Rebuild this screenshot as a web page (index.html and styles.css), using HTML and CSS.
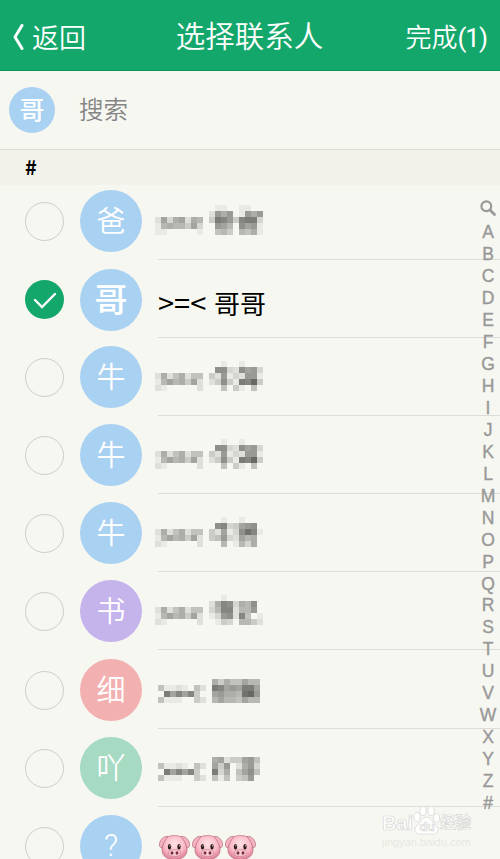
FILE: index.html
```html
<!DOCTYPE html>
<html lang="zh-CN">
<head>
    <meta charset="UTF-8">
    <title>选择联系人</title>
    <link rel="stylesheet" href="styles.css">
</head>
<body>
<svg class="defs">
    <defs>
        <radialGradient id="skin" cx="50%" cy="35%" r="65%">
            <stop offset="0" stop-color="#ffe0e4"/>
            <stop offset="0.6" stop-color="#fbbcc8"/>
            <stop offset="1" stop-color="#dd7f98"/>
        </radialGradient>
        <symbol id="pig" viewBox="0 0 31 29">
            <path d="M15.500 .6C22 .6 26 3 27 8c.6 2.500 1 4 1 7 0 6-5 9.500-12.500 9.500S3 21 3 15c0-3 .4-4.500 1-7C5 3 9 .6 15.500 .6z" fill="url(#skin)" stroke="#bd6c81" stroke-width=".7"/>
            <path d="M9 1.500C5 .8 1.500 4 .5 8.500c-.4 2 .5 4.500 2.500 4.500C4 9 6 5 9 1.500zM22 1.500c4-.7 7.500 2.500 8.500 7 .4 2-.5 4.500-2.500 4.500C27 9 25 5 22 1.500z" fill="#f3b3bf" stroke="#b5687c" stroke-width=".7"/>
            <ellipse cx="10.500" cy="11.800" rx="1.700" ry="2.700" fill="#2b1a1d"/>
            <ellipse cx="20" cy="11.800" rx="1.700" ry="2.700" fill="#2b1a1d"/>
            <circle cx="10.900" cy="10.800" r=".6" fill="#fff"/>
            <circle cx="20.400" cy="10.800" r=".6" fill="#fff"/>
            <rect x="9.500" y="14.800" width="12" height="6.400" rx="3.200" fill="#fbd0d6" stroke="#c9788c" stroke-width=".7"/>
            <ellipse cx="13" cy="18" rx="1.500" ry="1.700" fill="#7b2d3e"/>
            <ellipse cx="18" cy="18" rx="1.500" ry="1.700" fill="#7b2d3e"/>
        </symbol>
    </defs>
</svg>
<div class="page">
    <div class="header">
        <div class="back">
            <svg width="12" height="26" viewBox="0 0 12 26"><path d="M10 1.500L3 13l7 11.500" fill="none" stroke="#fff" stroke-width="3" stroke-linecap="round" stroke-linejoin="round"/></svg>
            <span>返回</span>
        </div>
        <h1>选择联系人</h1>
        <div class="done">完成<span>(1)</span></div>
    </div>
    <div class="search">
        <span class="chip">哥</span>
        <span class="placeholder">搜索</span>
    </div>
    <div class="section">#</div>
    <ul class="list">
        <li class="first"><i class="check"></i><span class="avatar">爸</span><div class="name"><svg class="mosaic"></svg></div></li>
        <li><i class="check on"><svg width="24" height="18" viewBox="0 0 24 18"><path d="M2 9l7 7L22 3" fill="none" stroke="#fff" stroke-width="2.400" stroke-linecap="round"/></svg></i><span class="avatar bold">哥</span><div class="name"><span class="text"><span>&gt;=&lt;</span> 哥哥</span></div></li>
        <li><i class="check"></i><span class="avatar">牛</span><div class="name"><svg class="mosaic"></svg></div></li>
        <li><i class="check"></i><span class="avatar">牛</span><div class="name"><svg class="mosaic"></svg></div></li>
        <li><i class="check"></i><span class="avatar">牛</span><div class="name"><svg class="mosaic"></svg></div></li>
        <li><i class="check"></i><span class="avatar purple">书</span><div class="name"><svg class="mosaic"></svg></div></li>
        <li><i class="check"></i><span class="avatar pink">细</span><div class="name"><svg class="mosaic short"></svg></div></li>
        <li><i class="check"></i><span class="avatar green">吖</span><div class="name"><svg class="mosaic short"></svg></div></li>
        <li><i class="check"></i><span class="avatar mark">?</span><div class="name pigs"><svg><use href="#pig"/></svg><svg><use href="#pig"/></svg><svg><use href="#pig"/></svg></div></li>
    </ul>
    <div class="index" id="index">
        <svg width="16" height="16" viewBox="0 0 16 16"><circle cx="6.300" cy="6.300" r="4.900" fill="none" stroke="#999" stroke-width="2.200"/><path d="M10 10l4.500 4.500" stroke="#999" stroke-width="2.800" stroke-linecap="round"/></svg>
    </div>
    <div class="watermark">
        <div class="brand">
            <span>Bai</span>
            <span class="paw">
                <svg width="27" height="29" viewBox="0 0 27 29"><g fill="#fff" stroke="#dededb"><ellipse cx="4" cy="11" rx="3.200" ry="4.500"/><ellipse cx="10" cy="5" rx="3.200" ry="4.500"/><ellipse cx="18" cy="5" rx="3.200" ry="4.500"/><ellipse cx="23.500" cy="12" rx="3" ry="4.300"/><path d="M13.500 11c4 0 5 4 8 7s5 5 3 8-7 2-11 2-9 1-11-2 0-5 3-8 4-7 8-7z"/></g></svg>
                <b>du</b>
            </span>
            <span class="cn">经验</span>
        </div>
        <div class="url">jingyan.baidu.com</div>
    </div>
</div>
<script src="main.js"></script>
</body>
</html>
```
FILE: styles.css
```css
* {
    margin: 0;
    padding: 0;
    box-sizing: border-box;
}
body {
    background: #f7f7f1;
    font-family: "Liberation Sans", "Noto Sans CJK SC", sans-serif;
    font-weight: 350;
    overflow: hidden;
}
.defs {
    display: block;
    width: 0;
    height: 0;
}
.page {
    position: relative;
    height: 859px;
    overflow: hidden;
}
.header {
    display: grid;
    grid-template-columns: 1fr auto 1fr;
    align-items: center;
    height: 71px;
    padding: 3px 13px 0 12px;
    background: #14a76c;
    border-bottom: 1px solid #0c9059;
    color: #fff;
}
.back {
    display: flex;
    align-items: center;
    gap: 8px;
    font-size: 27px;
}
.header h1 {
    padding-bottom: 5px;
    font-size: 29.5px;
    font-weight: 350;
}
.done {
    padding-bottom: 2px;
    font-size: 26px;
    text-align: right;
}
.done span {
    font-family: Roboto, sans-serif;
    font-weight: 400;
    letter-spacing: -1px;
}
.search {
    display: flex;
    align-items: center;
    height: 78px;
    padding-left: 9px;
    gap: 24px;
    color: #858585;
    font-size: 24.5px;
}
.placeholder {
    padding-bottom: 3px;
}
.chip {
    width: 46px;
    height: 46px;
    border-radius: 50%;
    background: #a9d1f2;
    color: #fff;
    font-size: 25px;
    font-weight: 500;
    line-height: 46px;
    text-align: center;
}
.section {
    height: 36px;
    padding-left: 25px;
    border-top: 1px solid #deded2;
    background: #f3f2ea;
    font: bold 20px/34px "Noto Sans CJK SC", sans-serif;
}
.list {
    list-style: none;
}
.list li {
    display: flex;
    align-items: flex-end;
    height: 78.1px;
    padding-left: 25px;
}
.list .first {
    height: 75px;
}
.check {
    display: flex;
    align-items: center;
    justify-content: center;
    width: 39px;
    height: 39px;
    margin: 0 16px 19px 0;
    border: 1.500px solid #cdcdcb;
    border-radius: 50%;
}
.check.on {
    border: none;
    background: #14a76c;
}
.avatar {
    width: 62px;
    height: 62px;
    margin: 0 16px 8px 0;
    border-radius: 50%;
    background: #a9d1f2;
    color: #fff;
    font-size: 29px;
    line-height: 64px;
    text-align: center;
}
.avatar.bold {
    margin-bottom: 7px;
    font-size: 33px;
    font-weight: 500;
}
.avatar.mark {
    font-family: Roboto, sans-serif;
    font-size: 31px;
    font-weight: 300;
    line-height: 62px;
}
.avatar.purple {
    background: #c5b3ec;
}
.avatar.pink {
    background: #f3b0b1;
}
.avatar.green {
    background: #a6dac3;
}
.name {
    display: flex;
    align-items: flex-end;
    flex: 1;
    height: 100%;
    border-bottom: 1px solid #dcdcd8;
}
.text {
    margin-bottom: 15px;
    color: #000;
    font: 26px/38px "Noto Sans CJK SC", sans-serif;
}
.text span {
    font-size: 29px;
    line-height: 30px;
    margin-right: 2px;
}
.mosaic {
    width: 108px;
    height: 30px;
    margin: 0 0 24px -3px;
}
.mosaic.short {
    width: 102px;
    height: 24px;
    margin: 0 0 25px;
}
.pigs {
    gap: 2px;
    padding-left: 1px;
}
.pigs svg {
    width: 31px;
    height: 29px;
    margin-bottom: 20px;
}
.index {
    position: absolute;
    top: 200px;
    right: 0;
    display: flex;
    flex-direction: column;
    align-items: center;
    width: 24px;
    color: #999;
    font-size: 17.5px;
    line-height: 21.970px;
    -webkit-text-stroke: 0.4px #999;
}
.index svg {
    margin-bottom: 6px;
}
.watermark {
    position: absolute;
    left: 382px;
    top: 806px;
    width: 95px;
    color: #fff;
}
.brand {
    display: flex;
    align-items: flex-end;
    height: 29px;
    font-size: 20px;
    font-weight: bold;
    line-height: 24px;
    -webkit-text-stroke: 0.7px #d6d6d3;
}
.paw {
    position: relative;
    width: 27px;
    height: 29px;
}
.paw b {
    position: absolute;
    left: 6px;
    top: 9px;
    font-size: 13px;
}
.cn {
    font-size: 15.5px;
}
.url {
    color: #e7e7e2;
    font-size: 11px;
    line-height: 14px;
}
```
FILE: main.js
```javascript
// one hex digit per 6px block, 0 is empty
var left = ["00000000", "00000000", "27257255", "16867482", "21000002"];
var leftFirst = ["00000000", "00000000", "28378276", "16766483", "11000001"];
var leftShort = ["00000000", "51121052", "0c8b8b40", "51110042"];
var niu = ["001001000", "0aa32a893", "429132991", "24a41cbe4", "005041050"];
var blocks = [
    ["011001100", "297901979", "4cb94bcc3", "09860a891", "056406571"],
    niu,
    niu,
    ["001001000", "0ab3489a0", "42813adb1", "459328670", "006016370"],
    ["001000000", "27ba376a0", "36bb26690", "139a2b501", "014306642"],
    ["74755866", "cb898cc8", "89776de9", "68665866"],
    ["78244895", "84902793", "c37058a5", "51504590"]
];
var aMosaic = document.querySelectorAll(".mosaic");
for (var i = 0; i < aMosaic.length; i++) {
    var start = i == 0 ? leftFirst : left;
    if (blocks[i].length == 4) {
        start = leftShort;
    }
    var html = "";
    for (var y = 0; y < blocks[i].length; y++) {
        var line = start[y] + "0" + blocks[i][y];
        for (var x = 0; x < line.length; x++) {
            var n = parseInt(line.charAt(x), 16);
            if (n) {
                var c = 243 - n * 10;
                html += '<rect x="' + x * 6 + '" y="' + y * 6 + '" width="6" height="6" fill="rgb(' + c + ',' + c + ',' + (c - 3) + ')"/>';
            }
        }
    }
    aMosaic[i].setAttribute("shape-rendering", "crispEdges");
    aMosaic[i].innerHTML = html;
}

var letters = "ABCDEFGHIJKLMNOPQRSTUVWXYZ#";
for (var j = 0; j < letters.length; j++) {
    var span = document.createElement("span");
    span.innerHTML = letters.charAt(j);
    document.getElementById("index").appendChild(span);
}
```
